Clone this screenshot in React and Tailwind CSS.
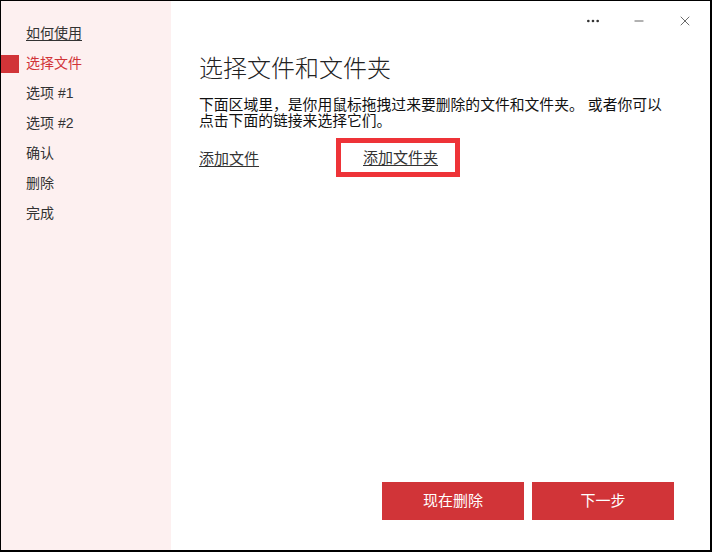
import { MoreHorizontal, Minus, X } from 'lucide-react'

const steps = [
  { label: '如何使用', link: true },
  { label: '选择文件', active: true },
  { label: '选项 #1' },
  { label: '选项 #2' },
  { label: '确认' },
  { label: '删除' },
  { label: '完成' },
]

export default function App() {
  return (
    <div
      className="w-[712px] h-[552px] flex bg-white border-l border-t border-r-2 border-b-2 border-black text-[#222]"
      style={{ fontFamily: '"Liberation Sans", "Noto Sans CJK SC", sans-serif' }}
    >
      {/* sidebar */}
      <div className="w-[170px] shrink-0 bg-[#fdf0f0] pt-[17px]">
        {steps.map((s) => (
          <div key={s.label} className="relative h-[30px] flex items-center pl-[25px] text-[14px]">
            {s.active && <div className="absolute left-0 top-[7px] w-[18px] h-[18px] bg-[#d13438]" />}
            <span
              className={
                s.active
                  ? 'text-[#d13438]'
                  : s.link
                  ? 'text-[#333] underline underline-offset-2'
                  : 'text-[#333]'
              }
            >
              {s.label}
            </span>
          </div>
        ))}
      </div>

      {/* main */}
      <div className="flex-1 flex flex-col">
        <div className="h-[40px] flex justify-end items-center pr-[2px]">
          <button className="w-[46px] h-[40px] flex items-center justify-center text-[#333]">
            <MoreHorizontal size={16} strokeWidth={2} />
          </button>
          <button className="w-[46px] h-[40px] flex items-center justify-center text-[#333]">
            <Minus size={14} strokeWidth={1.3} />
          </button>
          <button className="w-[46px] h-[40px] flex items-center justify-center text-[#333]">
            <X size={16} strokeWidth={1.1} />
          </button>
        </div>

        <div className="pl-[28px] pr-[36px]">
          <h1 className="mt-[12px] text-[24px] leading-[32px] font-light text-[#222]">选择文件和文件夹</h1>
          <p className="mt-[12px] text-[14.8px] leading-[16px] text-[#111] w-[472px]">
            下面区域里，是你用鼠标拖拽过来要删除的文件和文件夹。 或者你可以点击下面的链接来选择它们。
          </p>
          <div className="mt-[9px] flex items-center h-[39px]">
            <a className="w-[137px] text-[15px] text-[#333] underline underline-offset-2 pt-[4px]">添加文件</a>
            <div className="h-[39px] w-[124px] border-[5px] border-[#ee3338] flex items-center pl-[22px]">
              <a className="text-[15px] text-[#333] underline underline-offset-2 pt-[2px]">添加文件夹</a>
            </div>
          </div>
        </div>

        <div className="flex-1" />

        <div className="flex justify-end gap-[8px] pr-[36px] pb-[30px]">
          <button className="w-[142px] h-[38px] bg-[#d13438] text-white text-[15px]">现在删除</button>
          <button className="w-[142px] h-[38px] bg-[#d13438] text-white text-[15px]">下一步</button>
        </div>
      </div>
    </div>
  )
}
